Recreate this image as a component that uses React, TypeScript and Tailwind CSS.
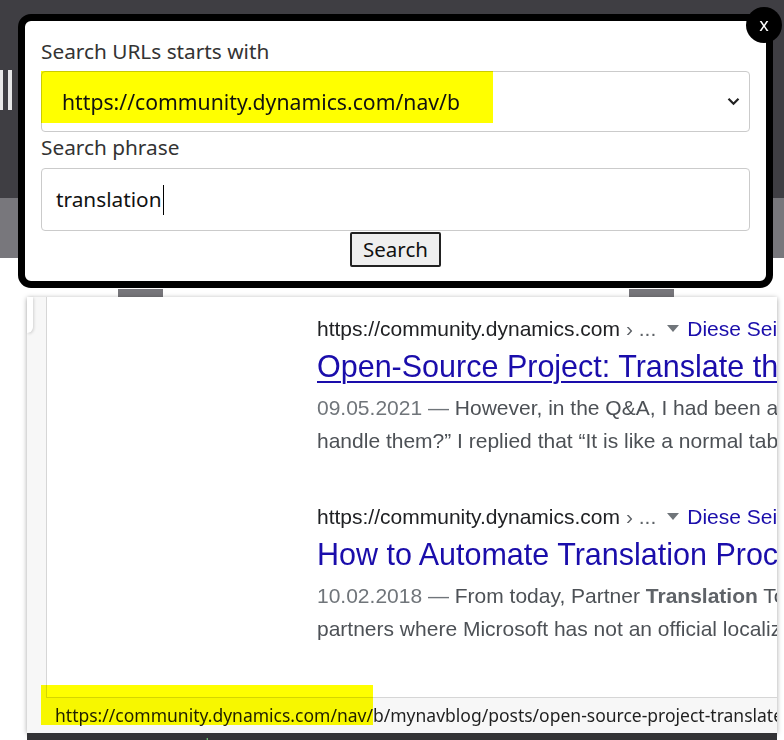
import React from "react";

const results = [
  {
    title: "Open-Source Project: Translate the XLIFF files in Business Central",
    underline: true,
    date: "09.05.2021",
    line1: "However, in the Q&A, I had been asked how do we",
    line2: "handle them?” I replied that “It is like a normal table in the database",
  },
  {
    title: "How to Automate Translation Process in Business Central",
    underline: false,
    date: "10.02.2018",
    line1: null,
    line2: "partners where Microsoft has not an official localization",
  },
];

function ResultUrl() {
  return (
    <div className="h-[33px] leading-[33px] text-[21px] whitespace-nowrap flex items-center text-[#202124]">
      <span className="shrink-0">https://community.dynamics.com</span>
      <span className="shrink-0 text-[#5f6368]">&nbsp;› ...</span>
      <svg width="12" height="7" viewBox="0 0 12 7" className="shrink-0 ml-[11px] mr-[8px]">
        <path d="M0 0h12L6 7z" fill="#70757a" />
      </svg>
      <span className="shrink-0 text-[#1a0dab]">Diese Seite übersetzen</span>
    </div>
  );
}

export default function App() {
  return (
    <div className="relative w-[784px] h-[740px] overflow-hidden bg-white">
      {/* page behind the popup */}
      <div className="h-[198px] bg-[#3f3e43] pt-[70px] flex gap-[5px]">
        <div className="w-[3px] h-[40px] bg-[#e8e8e8]" />
        <div className="w-[4px] h-[40px] bg-[#e8e8e8]" />
      </div>
      <div className="h-[60px] bg-[#78777c]" />

      <div className="absolute left-[118px] top-[289px] w-[45px] h-[8px] bg-[#77767b]" />
      <div className="absolute left-[629px] top-[289px] w-[45px] h-[8px] bg-[#77767b]" />

      {/* search results preview */}
      <div className="absolute left-[27px] top-[297px] w-[750px] h-[436px] flex bg-white shadow-[0_1px_5px_rgba(0,0,0,0.35)] font-['Liberation_Sans',Arial,sans-serif]">
        <div className="relative w-[19px] bg-[#f7f7f7]">
          <div className="absolute left-0 top-0 w-[6px] h-[36px] bg-white rounded-br-[6px] shadow-[1px_1px_3px_rgba(0,0,0,0.15)]" />
        </div>
        <div className="flex-1 flex flex-col min-w-0">
          <div className="h-[401px] overflow-hidden border-l border-b border-[#d6d6d6] bg-white pl-[270px] pt-[15px]">
            <div className="flex flex-col">
              <ResultUrl />
              <div
                className={`h-[42px] leading-[42px] text-[30.5px] whitespace-nowrap text-[#1a0dab] ${
                  results[0].underline ? "underline decoration-[2px] underline-offset-[4px]" : ""
                }`}
              >
                {results[0].title}
              </div>
              <div className="mt-[4px] text-[21px] leading-[33px] text-[#4d5156] whitespace-nowrap">
                <div>
                  <span className="text-[#70757a]">{results[0].date} — </span>
                  {results[0].line1}
                </div>
                <div>{results[0].line2}</div>
              </div>
            </div>

            <div className="flex flex-col mt-[43px]">
              <ResultUrl />
              <div className="h-[42px] leading-[42px] text-[30.5px] whitespace-nowrap text-[#1a0dab]">
                {results[1].title}
              </div>
              <div className="mt-[4px] text-[21px] leading-[33px] text-[#4d5156] whitespace-nowrap">
                <div>
                  <span className="text-[#70757a]">{results[1].date} — </span>
                  From today, Partner <b className="text-[#5f6368]">Translation</b> Toolkit is available for
                </div>
                <div>{results[1].line2}</div>
              </div>
            </div>

            <div className="flex flex-col mt-[44px]">
              <ResultUrl />
            </div>
          </div>
          <div className="h-[35px] bg-[#f7f7f7] pl-[9px] text-[17.5px] leading-[35px] text-[#1f1f1f] whitespace-nowrap overflow-hidden font-['Noto_Sans',sans-serif]">
            https://community.dynamics.com/nav/b/mynavblog/posts/open-source-project-translate-the-xliff-files
          </div>
        </div>
      </div>

      <div className="absolute left-[27px] top-[733px] w-[750px] h-[7px] bg-[#333336] overflow-hidden">
        <span className="block pl-[143px] pt-[3px] text-[14px] leading-none text-[#6fbf73] font-['DejaVu_Sans_Mono',monospace]">
          assets
        </span>
      </div>

      {/* highlighter on the status bubble */}
      <div className="absolute left-[41px] top-[685px] w-[332px] h-[40px] bg-[#ffff00] mix-blend-multiply" />

      {/* popup dialog */}
      <div className="absolute left-[18px] top-[14px] w-[755px] h-[274px] border-[7px] border-black rounded-[13px] bg-white px-[16px] pt-[16px] font-['Noto_Sans',sans-serif]">
        <div className="h-[28px] leading-[28px] text-[20.8px] text-[#333]">Search URLs starts with</div>
        <div className="relative mt-[6px] h-[61px] border border-[#cbcbcb] rounded-[4px] flex items-center justify-between pl-[20px] pr-[9px]">
          <div className="absolute -left-px -top-px w-[452px] h-[52px] bg-[#ffff00] mix-blend-multiply" />
          <span className="relative text-[21.2px] text-[#111]">https://community.dynamics.com/nav/b</span>
          <svg width="13" height="9" viewBox="0 0 13 9" className="relative">
            <path d="M1.5 1.8l5 5 5-5" fill="none" stroke="#222" strokeWidth="2.2" />
          </svg>
        </div>
        <div className="mt-px h-[28px] leading-[28px] text-[20.8px] text-[#333]">Search phrase</div>
        <div className="mt-[7px] h-[63px] border border-[#cbcbcb] rounded-[4px] flex items-center pl-[14px]">
          <span className="text-[20.8px] text-[#111]">translation</span>
          <span className="ml-px w-px h-[30px] bg-black" />
        </div>
        <div className="mt-px flex justify-center">
          <button className="h-[35px] px-[11px] border-2 border-[#222] rounded-[2px] bg-[#efefef] text-[20.5px] leading-none text-[#111]">
            Search
          </button>
        </div>
      </div>

      <div className="absolute left-[746px] top-[7px] w-[36px] h-[36px] rounded-full bg-black flex items-center justify-center text-white text-[18px] leading-none pb-[3px] font-['Noto_Sans',sans-serif]">
        x
      </div>
    </div>
  );
}
